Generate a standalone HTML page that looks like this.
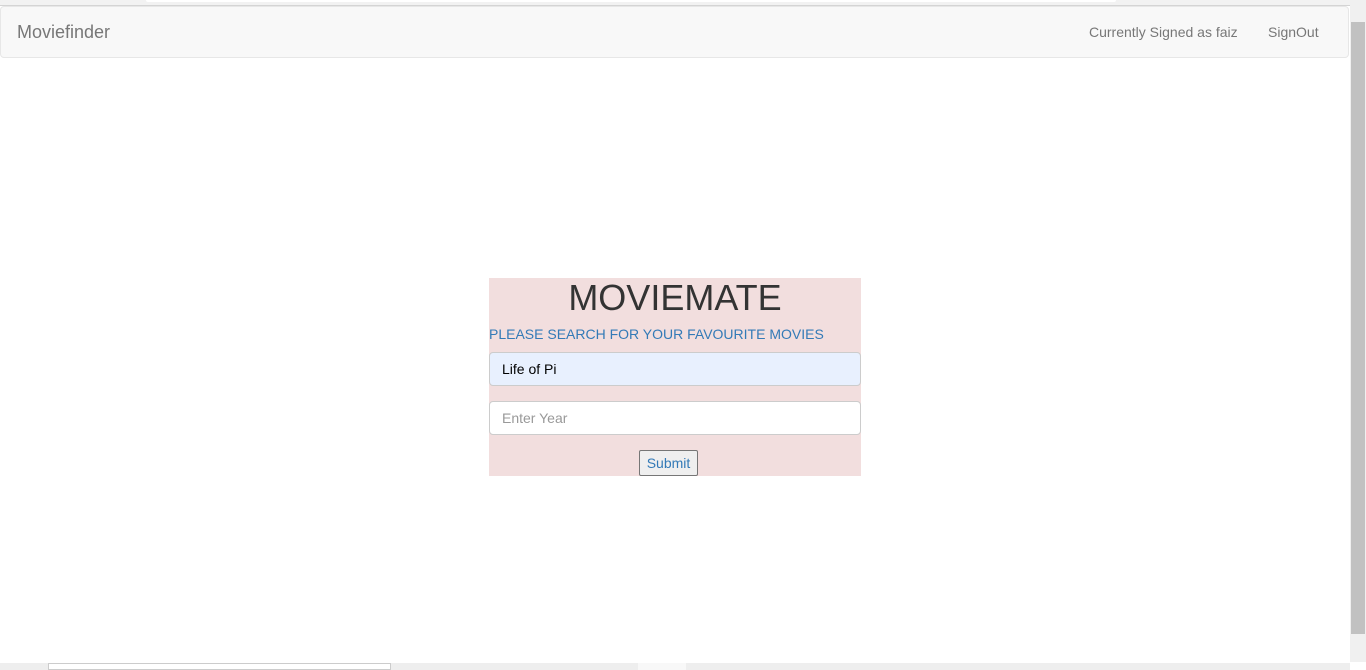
<!DOCTYPE html>
<html><head><style>
body{margin:0;width:1366px;height:670px;overflow:hidden;background:#fff;font-family:"Liberation Sans",sans-serif;position:relative}
.top{position:absolute;left:0;top:0;width:1350px;height:5px;background:#f2f2f2;border-bottom:1px solid #d4d4d4}
.top i{position:absolute;left:146px;top:0;width:970px;height:2px;background:#fff;border-radius:0 0 3px 3px}
.nav{position:absolute;left:0;top:6px;width:1347px;height:50px;background:#f8f8f8;border:1px solid #e7e7e7;border-radius:4px}
.brand{position:absolute;left:16px;top:15px;font-size:18px;color:#777}
.r{position:absolute;top:17px;font-size:14px;color:#777}
.sb{position:absolute;left:1350px;top:0;width:16px;height:662px;background:#f0f0f0}
.sb .th{position:absolute;left:1px;top:22px;width:14px;height:612px;background:#c1c1c1}
.bot{position:absolute;left:0;top:663px;width:1350px;height:7px;background:#eeeeee}
.box{position:absolute;left:489px;top:278px;width:372px;height:198px;background:#f2dede}
h1{margin:0;text-align:center;font-weight:normal;font-size:36px;color:#333;line-height:40px;padding-top:0}
.p{position:absolute;left:0;top:48px;font-size:14px;color:#337ab7}
.in{position:absolute;left:0;width:370px;height:32px;border:1px solid #ccc;border-radius:4px;font-size:14px;line-height:32px;box-sizing:content-box}
.in span{padding-left:12px}
.btn{position:absolute;left:150px;top:172px;width:59px;height:26px;border:1px solid #767676;border-radius:2px;background:#efefef;color:#337ab7;font-size:14px;text-align:center;line-height:24px;box-sizing:border-box}
</style></head><body>
<div class="top"><i></i></div>
<div class="nav"><div class="brand">Moviefinder</div>
<div class="r" style="left:1088px">Currently Signed as faiz</div>
<div class="r" style="left:1267px">SignOut</div></div>
<div class="sb"><div class="th"></div></div>
<div class="bot"><div style="position:absolute;left:48px;top:0;width:343px;height:7px;background:#fff;border:1px solid #ccc;box-sizing:border-box"></div><div style="position:absolute;left:638px;top:0;width:48px;height:7px;background:#f8f8f8"></div></div>
<div class="box">
<h1>MOVIEMATE</h1>
<div class="p">PLEASE SEARCH FOR YOUR FAVOURITE MOVIES</div>
<div class="in" style="top:74px;background:#e8f0fe;color:#000"><span>Life of Pi</span></div>
<div class="in" style="top:123px;background:#fff;color:#999"><span>Enter Year</span></div>
<div class="btn">Submit</div>
</div>
</body></html>
